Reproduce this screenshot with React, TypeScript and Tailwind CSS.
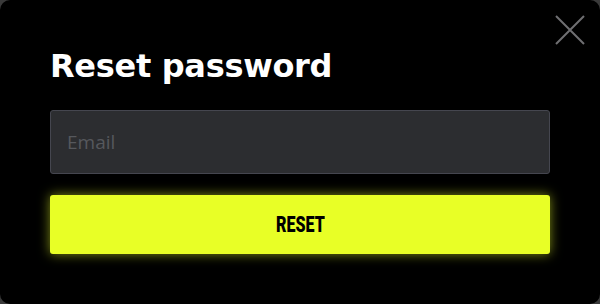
import React from "react";

export default function App() {
  return (
    <div className="w-[600px] h-[304px] bg-[#3a3a3a]">
      <div className="relative w-full h-full rounded-[10px] bg-black px-[50px] pt-[46px]">
        <button
          aria-label="Close"
          className="absolute right-[14px] top-[14px] w-[32px] h-[32px] flex items-center justify-center"
        >
          <svg width="32" height="32" viewBox="0 0 32 32" fill="none">
            <path d="M2 2L30 30M30 2L2 30" stroke="#6f6f72" strokeWidth="2" />
          </svg>
        </button>
        <h2
          className="text-white text-[32px] font-bold leading-[40px] tracking-[-0.3px]"
          style={{ fontFamily: '"DejaVu Sans", sans-serif' }}
        >
          Reset password
        </h2>
        <input
          type="email"
          placeholder="Email"
          className="mt-[24px] block w-full h-[64px] rounded-[3px] border border-[#45464f] bg-[#2c2d30] px-[16px] text-[19px] text-white placeholder:text-[#56585d] outline-none"
          style={{ fontFamily: '"Open Sans", sans-serif' }}
        />
        <button
          className="mt-[21px] flex items-center justify-center w-full h-[59px] rounded-[3px] bg-[#e8ff26] text-black shadow-[0_0_12px_rgba(232,255,38,0.55)]"
          style={{ fontFamily: '"Roboto", sans-serif' }}
        >
          <span className="inline-block text-[22px] font-black leading-none scale-x-[0.73]">RESET</span>
        </button>
      </div>
    </div>
  );
}
